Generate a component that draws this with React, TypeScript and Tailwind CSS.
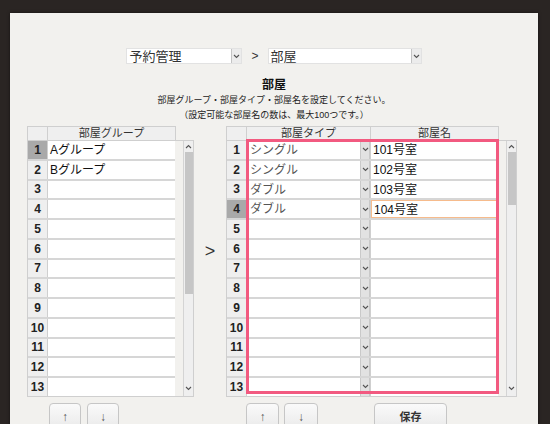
import React from "react";

const FONT = "font-['Liberation_Sans','Noto_Sans_CJK_JP',sans-serif]";

const groups = ["Aグループ", "Bグループ"];
const rooms: { type: string; name: string }[] = [
  { type: "シングル", name: "101号室" },
  { type: "シングル", name: "102号室" },
  { type: "ダブル", name: "103号室" },
  { type: "ダブル", name: "104号室" },
];
const ROWS = Array.from({ length: 13 }, (_, i) => i + 1);

function Chevron({ up = false }: { up?: boolean }) {
  return (
    <svg width="7" height="5" viewBox="0 0 7 5" className={up ? "rotate-180" : ""}>
      <path d="M1 1 L3.5 3.5 L6 1" fill="none" stroke="#555" strokeWidth="1.1" />
    </svg>
  );
}

function Select({ label, width }: { label: string; width: string }) {
  return (
    <div className={`flex h-[16px] ${width} bg-white border border-[#e2e2e2]`}>
      <span className="flex-1 pl-[2px] text-[13px] leading-[15px] text-[#333]">{label}</span>
      <span className="flex w-[10px] items-center justify-center bg-[#ececec] border-l border-[#c4c4c4]">
        <Chevron />
      </span>
    </div>
  );
}

// Fake native scrollbar beside each grid: track, thumb and the two arrows.
function Scrollbar({ thumb }: { thumb: string }) {
  return (
    <div className="ml-[8px] flex w-[10px] flex-col items-center border-l border-[#d4d4d4] bg-[#efefef]">
      <div className="flex h-[11px] items-center">
        <Chevron up />
      </div>
      <div className={`w-[8px] ${thumb} bg-[#c6c6c6]`} />
      <div className="flex-1" />
      <div className="mb-[3px] flex h-[10px] items-center">
        <Chevron />
      </div>
    </div>
  );
}

function NumCell({ n, active }: { n: number; active: boolean }) {
  return (
    <div
      className={`flex w-[20px] shrink-0 items-center justify-center border-r border-[#cfcfcf] text-[12px] font-bold text-[#222] ${
        active ? "bg-[#a9a9a9]" : "bg-[#efefef]"
      }`}
    >
      {n}
    </div>
  );
}

function Btn({ children, w }: { children: React.ReactNode; w: string }) {
  return (
    <button
      type="button"
      className={`flex h-[28px] ${w} items-center justify-center rounded-[4px] border border-[#c6c6c6] bg-gradient-to-b from-[#fafafa] to-[#e9e9e9] text-[#555]`}
    >
      {children}
    </button>
  );
}

export default function App() {
  return (
    <div className={`h-[424px] w-[550px] overflow-hidden bg-[#2a2523] pl-[10px] pt-[13px] ${FONT}`}>
      <div className="flex h-[430px] w-[528px] flex-col bg-[#f2f1ee] shadow-[0_0_3px_rgba(0,0,0,0.5)]">
        {/* breadcrumb selects */}
        <div className="mt-[34px] flex items-center justify-center">
          <Select label="予約管理" width="w-[116px]" />
          <span className="mx-[9px] text-[12px] text-[#333]">&gt;</span>
          <Select label="部屋" width="w-[154px]" />
        </div>

        <div className="mt-[12px] text-center text-[12px] font-bold leading-[16px] text-[#111]">部屋</div>
        <div className="text-center text-[9px] leading-[15px] text-[#222]">
          <p>部屋グループ・部屋タイプ・部屋名を設定してください。</p>
          <p>（設定可能な部屋名の数は、最大100つです。）</p>
        </div>

        <div className="mt-[3px] flex pl-[17px]">
          {/* room groups */}
          <div className="flex w-[167px] flex-col">
            <div className="flex h-[14px] w-[149px] border border-b-0 border-[#cfcfcf] bg-[#efefef] text-[11px] leading-[12px] text-[#333]">
              <div className="w-[20px] border-r border-[#cfcfcf]" />
              <div className="flex-1 text-center">部屋グループ</div>
            </div>
            <div className="flex h-[257px] border border-[#cfcfcf] border-l-0">
              <div className="w-[149px] overflow-hidden border-l border-[#cfcfcf] bg-white">
                {ROWS.map((n) => (
                  <div key={n} className="flex h-[19.75px] border-b-2 border-[#d6d6d6]">
                    <NumCell n={n} active={n === 1} />
                    <div className="flex-1 pl-[2px] text-[12px] leading-[18px] text-[#111]">
                      {groups[n - 1] ?? ""}
                    </div>
                  </div>
                ))}
              </div>
              <Scrollbar thumb="h-[142px]" />
            </div>
            <div className="mt-[6px] flex gap-[6px] pl-[22px]">
              <Btn w="w-[32px]">
                <span className="text-[12px] leading-[12px]">↑</span>
              </Btn>
              <Btn w="w-[32px]">
                <span className="text-[12px] leading-[12px]">↓</span>
              </Btn>
            </div>
          </div>

          <div className="w-[32px] pt-[115px] text-center text-[18px] leading-[20px] text-[#333]">&gt;</div>

          {/* room types and names */}
          <div className="relative flex w-[291px] flex-col">
            <div className="flex h-[14px] w-[273px] border border-b-0 border-[#cfcfcf] bg-[#efefef] text-[11px] leading-[12px] text-[#333]">
              <div className="w-[20px] border-r border-[#cfcfcf]" />
              <div className="w-[124px] border-r border-[#cfcfcf] text-center">部屋タイプ</div>
              <div className="flex-1 text-center">部屋名</div>
            </div>
            <div className="flex h-[257px] border border-[#cfcfcf] border-l-0">
              <div className="w-[273px] overflow-hidden border-l border-[#cfcfcf] bg-white">
                {ROWS.map((n) => {
                  const r = rooms[n - 1];
                  const focused = n === 4;
                  return (
                    <div key={n} className="flex h-[19.75px] border-b-2 border-[#d6d6d6]">
                      <NumCell n={n} active={focused} />
                      <div className="flex w-[124px] border-r border-[#cfcfcf]">
                        <div className="flex-1 pl-[3px] text-[12px] leading-[18px] text-[#555]">{r?.type ?? ""}</div>
                        <div className="flex w-[10px] items-center justify-center border-x border-[#c9c9c9] bg-[#e2e2e2]">
                          <Chevron />
                        </div>
                      </div>
                      <div
                        className={`flex-1 pl-[2px] text-[12px] leading-[18px] text-[#111] ${
                          focused ? "border border-[#f6bb8c]" : ""
                        }`}
                      >
                        {r?.name ?? ""}
                      </div>
                    </div>
                  );
                })}
              </div>
              <Scrollbar thumb="h-[53px]" />
            </div>
            {/* highlight frame over the editable columns */}
            <div className="pointer-events-none absolute left-[20px] top-[13px] h-[255px] w-[253px] border-[3px] border-[#f25a80]" />
            <div className="mt-[6px] flex pl-[20px]">
              <Btn w="w-[33px]">
                <span className="text-[12px] leading-[12px]">↑</span>
              </Btn>
              <div className="ml-[5px]">
                <Btn w="w-[34px]">
                  <span className="text-[12px] leading-[12px]">↓</span>
                </Btn>
              </div>
              <div className="ml-[56px]">
                <Btn w="w-[73px]">
                  <span className="text-[11px] leading-[12px] font-bold text-[#333]">保存</span>
                </Btn>
              </div>
            </div>
          </div>
        </div>
      </div>
    </div>
  );
}
